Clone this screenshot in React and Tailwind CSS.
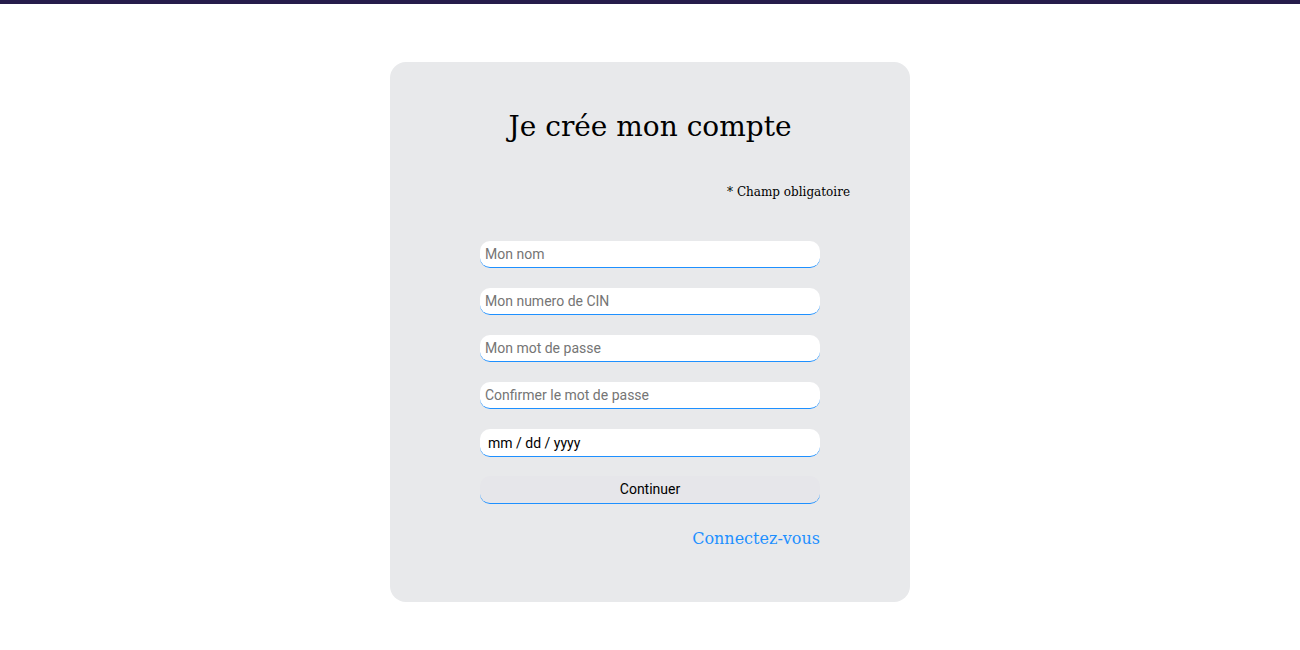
import React from 'react';

const fields = [
  { type: 'text', placeholder: 'Mon nom' },
  { type: 'text', placeholder: 'Mon numero de CIN' },
  { type: 'password', placeholder: 'Mon mot de passe' },
  { type: 'password', placeholder: 'Confirmer le mot de passe' },
];

export default function App() {
  return (
    <div className="min-h-screen bg-white">
      <div className="h-1 bg-[#261c4b]" />
      <div className="flex justify-center pt-[58px]">
        <div className="w-[520px] h-[540px] rounded-2xl bg-[#e8e9eb] px-[60px] pt-[41px]">
          <h1 className="text-center text-[28px] leading-[48px] text-black font-['DejaVu_Serif',serif]">
            Je crée mon compte
          </h1>
          <p className="mt-[33px] text-right text-[12px] leading-4 text-black font-['DejaVu_Serif',serif]">
            * Champ obligatoire
          </p>
          <form className="mx-auto mt-[41px] flex w-[340px] flex-col gap-[20px] font-['Roboto',sans-serif]">
            {fields.map((f) => (
              <input
                key={f.placeholder}
                type={f.type}
                placeholder={f.placeholder}
                className="h-[27px] w-full rounded-[10px] border-b border-[#1e90ff] bg-white px-[5px] text-[14px] text-black outline-none placeholder:text-[#757575]"
              />
            ))}
            <input
              type="text"
              placeholder="mm / dd / yyyy"
              className="h-[28px] w-full rounded-[10px] border-b border-[#1e90ff] bg-white px-[8px] text-[14px] text-black outline-none placeholder:text-black"
            />
            <button
              type="button"
              className="-mt-[1px] h-[28px] w-full rounded-[10px] border-b border-[#1e90ff] bg-[#e6e6ea] text-[14px] text-black"
            >
              Continuer
            </button>
          </form>
          <div className="mx-auto mt-[22px] w-[340px] text-right">
            <a href="#" className="text-[16px] text-[#1e90ff] font-['DejaVu_Serif',serif]">
              Connectez-vous
            </a>
          </div>
        </div>
      </div>
    </div>
  );
}
